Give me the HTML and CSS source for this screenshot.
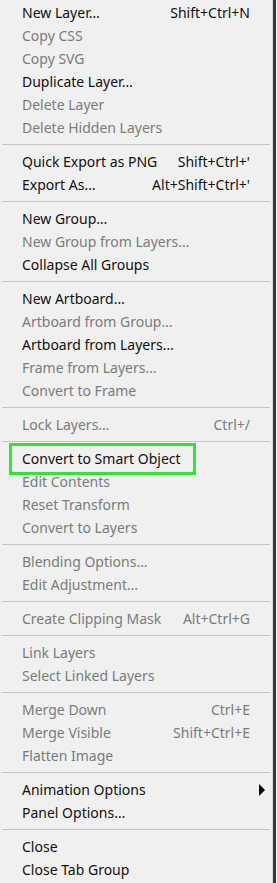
FILE: index.html
```html
<!DOCTYPE html>
<html>
<head>
<meta charset="utf-8">
<link rel="stylesheet" href="styles.css">
</head>
<body>
<div class="frame">
<div class="menu">
  <div class="item"><span>New Layer…</span><span class="key">Shift+Ctrl+N</span></div>
  <div class="item off"><span>Copy CSS</span></div>
  <div class="item off"><span>Copy SVG</span></div>
  <div class="item"><span>Duplicate Layer…</span></div>
  <div class="item off"><span>Delete Layer</span></div>
  <div class="item off"><span>Delete Hidden Layers</span></div>
  <div class="sep"></div>
  <div class="item"><span>Quick Export as PNG</span><span class="key">Shift+Ctrl+'</span></div>
  <div class="item"><span>Export As…</span><span class="key">Alt+Shift+Ctrl+'</span></div>
  <div class="sep"></div>
  <div class="item"><span>New Group…</span></div>
  <div class="item off"><span>New Group from Layers…</span></div>
  <div class="item"><span>Collapse All Groups</span></div>
  <div class="sep"></div>
  <div class="item"><span>New Artboard…</span></div>
  <div class="item off"><span>Artboard from Group…</span></div>
  <div class="item"><span>Artboard from Layers…</span></div>
  <div class="item off"><span>Frame from Layers…</span></div>
  <div class="item off"><span>Convert to Frame</span></div>
  <div class="sep"></div>
  <div class="item off"><span>Lock Layers…</span><span class="key">Ctrl+/</span></div>
  <div class="sep"></div>
  <div class="item marked"><span>Convert to Smart Object</span><span class="mark"></span></div>
  <div class="item off"><span>Edit Contents</span></div>
  <div class="item off"><span>Reset Transform</span></div>
  <div class="item off"><span>Convert to Layers</span></div>
  <div class="sep"></div>
  <div class="item off"><span>Blending Options…</span></div>
  <div class="item off"><span>Edit Adjustment…</span></div>
  <div class="sep"></div>
  <div class="item off"><span>Create Clipping Mask</span><span class="key">Alt+Ctrl+G</span></div>
  <div class="sep"></div>
  <div class="item off"><span>Link Layers</span></div>
  <div class="item off"><span>Select Linked Layers</span></div>
  <div class="sep"></div>
  <div class="item off"><span>Merge Down</span><span class="key">Ctrl+E</span></div>
  <div class="item off"><span>Merge Visible</span><span class="key">Shift+Ctrl+E</span></div>
  <div class="item off"><span>Flatten Image</span></div>
  <div class="sep"></div>
  <div class="item"><span>Animation Options</span><span class="arrow"></span></div>
  <div class="item"><span>Panel Options…</span></div>
  <div class="sep"></div>
  <div class="item"><span>Close</span></div>
  <div class="item"><span>Close Tab Group</span></div>
</div>
</div>
</body>
</html>
```

FILE: styles.css
```css
html, body {
  margin: 0;
  padding: 0;
  background: #f0f0f0;
}
.frame {
  display: flex;
  width: 277px;
  min-height: 883px;
}
.menu {
  flex: 0 0 273px;
  box-sizing: border-box;
  padding-top: 1px;
  background: #f0f0f0;
  border-right: 1px solid #dcdcdc;
  display: flex;
  flex-direction: column;
  font-family: "Noto Sans", "DejaVu Sans", sans-serif;
  font-size: 14px;
  color: #111;
}
.frame::after {
  content: "";
  flex: 0 0 3px;
  background: #3a3a3a;
}
.item {
  height: 23px;
  line-height: 23px;
  display: flex;
  justify-content: space-between;
  align-items: center;
  padding: 0 22px 0 22px;
  white-space: nowrap;
}
.item.off {
  color: #7b7b7b;
}
.sep {
  height: 11px;
}
.sep::before {
  content: "";
  display: block;
  margin: 5px 2px 0 2px;
  height: 1px;
  background: #c4c4c4;
}
.marked {
  position: relative;
}
.mark {
  position: absolute;
  left: 9px;
  top: -4px;
  width: 187px;
  height: 32px;
  box-sizing: border-box;
  border: 3px solid #2fe52f;
}
.arrow {
  width: 0;
  height: 0;
  border-top: 6px solid transparent;
  border-bottom: 6px solid transparent;
  border-left: 6px solid #000;
  margin-right: -15px;
}
```
